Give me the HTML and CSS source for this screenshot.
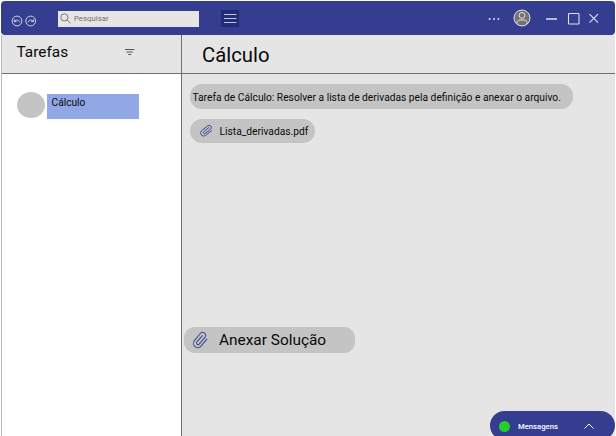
FILE: index.html
```html
<!DOCTYPE html>
<html lang="pt-BR">
<head>
<meta charset="utf-8">
<title>Tarefas</title>
<link rel="stylesheet" href="styles.css">
</head>
<body>
<div class="app">
  <header class="topbar">
    <svg class="history" width="26" height="12" viewBox="0 0 26 12">
      <circle cx="6" cy="6" r="4.9"/><circle cx="19.7" cy="6" r="4.9"/>
      <path d="M3.3 4.3v2.3h2.3M3.5 6.4c1.5-2.1 4.6-1.8 5.2.9M22.4 4.3v2.3h-2.3M22.2 6.4c-1.5-2.1-4.6-1.8-5.2.9"/>
    </svg>
    <label class="search">
      <svg width="11" height="11" viewBox="0 0 11 11"><circle cx="4.4" cy="4.4" r="3.6"/><path d="M7 7l3.4 3.4"/></svg>
      <span>Pesquisar</span>
    </label>
    <div class="menu"><svg width="18" height="17" viewBox="0 0 18 17"><path d="M3 4.5h12.5M3 8.5h12.5M3 12.5h12.5"/></svg></div>
    <svg class="dots" width="12" height="4" viewBox="0 0 12 4"><circle cx="1.6" cy="2" r="1"/><circle cx="6" cy="2" r="1"/><circle cx="10.4" cy="2" r="1"/></svg>
    <svg class="avatar" width="18" height="18" viewBox="0 0 18 18"><circle class="disc" cx="9" cy="9" r="8"/><circle cx="9" cy="6.4" r="2.9"/><path d="M4 15v-1.2c0-2 1.2-2.8 3-2.8h4c1.8 0 3 .8 3 2.8V15"/></svg>
    <svg class="window" width="54" height="13" viewBox="0 0 54 13"><path class="minimize" d="M0 7h11"/><rect x="22.5" y="1.5" width="10.5" height="10.5" rx=".6"/><path d="M43.5 2.2l8.5 8.5M52 2.2l-8.5 8.5"/></svg>
  </header>
  <div class="columns">
    <aside class="sidebar">
      <div class="heading side-heading">
        <h2>Tarefas</h2>
        <svg width="10" height="8" viewBox="0 0 10 8"><path d="M0 1.5h9.5M1.5 4h6.5M3.2 6.5h3"/></svg>
      </div>
      <div class="task"><span class="task-dot"></span><span class="task-name">Cálculo</span></div>
    </aside>
    <main class="content">
      <div class="heading main-heading"><h1>Cálculo</h1></div>
      <p class="pill description">Tarefa de Cálculo: Resolver a lista de derivadas pela definição e anexar o arquivo.</p>
      <div class="pill file">
        <svg width="13" height="12" viewBox="0 0 13 12"><path transform="translate(6.7 5.6) rotate(-38)" d="M4 -1H-3.2A1.2 1.2 0 0 0 -3.2 1.3H3.8A2.2 2.2 0 0 0 3.8 -3.1H-3.8A3.1 3.1 0 0 0 -3.8 3.1H4"/></svg>
        <span>Lista_derivadas.pdf</span>
      </div>
      <div class="pill attach">
        <svg width="16" height="18" viewBox="0 0 16 18"><path transform="translate(7.7 8.8) rotate(-50) scale(1.1)" d="M4.2 -1.3H-3.9A1.4 1.4 0 0 0 -3.9 1.5H4.2A2.7 2.7 0 0 0 4.2 -3.9H-4.2A3.9 3.9 0 0 0 -4.2 3.9H4.4"/></svg>
        <span>Anexar Solução</span>
      </div>
    </main>
  </div>
  <div class="messages">
    <i class="online"></i><span>Mensagens</span>
    <svg width="10" height="6" viewBox="0 0 10 6"><path d="M.5 5.5L5 1l4.5 4.5"/></svg>
  </div>
</div>
</body>
</html>
```
FILE: styles.css
```css
* { box-sizing: border-box; }
body { margin: 0; background: #fff; color: #090909; font-family: Roboto, sans-serif; }
h1, h2, p { margin: 0; font-weight: 400; }
svg { display: block; flex: none; fill: none; stroke: currentColor; }
span { white-space: nowrap; }

.app { position: relative; width: 616px; height: 436px; padding: 1px 1px 0; overflow: hidden; display: flex; flex-direction: column; }
.topbar { position: relative; height: 34px; flex: none; display: flex; align-items: center; border-radius: 4px; background: #343d8f; color: #dfe1f0; }
.history { margin: 5px 0 0 10px; stroke-width: .9; }
.search { width: 141px; height: 16px; margin: 1px 0 0 21px; padding-left: 2px; display: flex; align-items: center; gap: 3px; background: #e5e5e5; color: #707070; font-size: 7.8px; }
.search svg { stroke-width: .9; }
.search span { line-height: 10px; }
.menu { width: 18px; height: 17px; margin: 1px 0 0 22px; background: #222b78; color: #c2c6dd; }
.dots { margin: 2px 0 0 248.5px; fill: currentColor; stroke: none; }
.avatar { margin: 0 0 0 13.5px; }
.disc { fill: #74716f; }
.window { margin: 0 0 0 15px; stroke-width: 1.1; }
.minimize { stroke-width: 1.5; }

.columns { flex: 1; display: grid; grid-template-columns: 180px 1fr; border-left: 1px solid #b9b9b9; }
.sidebar { border-right: 1px solid #6e6e6e; background: #fff; }
.content { display: flex; flex-direction: column; align-items: flex-start; background: #e5e5e5; }
.heading { height: 39px; display: flex; border-bottom: 1px solid #707070; background: #e5e5e5; }
.side-heading { padding-left: 14.5px; }
.side-heading h2 { width: 108px; padding-top: 7px; font-size: 15.4px; line-height: 20px; }
.side-heading svg { margin-top: 13px; color: #555; }
.main-heading { width: 100%; padding: 8px 0 0 20px; }
.main-heading h1 { font-size: 20.3px; line-height: 25px; }

.task { display: flex; margin: 18px 0 0 15px; gap: 2px; }
.task-dot { width: 28px; height: 26px; border-radius: 50%; background: #c4c4c4; }
.task-name { width: 92px; height: 25px; margin-top: 2px; padding: 2px 0 0 4.5px; background: #91a7e6; font-size: 10.2px; line-height: 13px; }

.pill { display: flex; align-items: center; background: #c4c4c4; }
.pill svg { overflow: visible; color: #39458f; stroke-width: .9; }
.description { width: 383px; height: 25px; margin: 10px 0 0 8px; padding: 2px 0 0 2.5px; border-radius: 12px; font-size: 10.24px; white-space: nowrap; }
.file { width: 125px; height: 24px; margin: 10px 0 0 8px; padding-left: 10px; gap: 6.5px; border-radius: 12px; font-size: 10.24px; }
.attach { width: 171px; height: 26px; margin: 184px 0 0 2px; padding-left: 8.5px; gap: 10.5px; border-radius: 11px; font-size: 15.4px; }

.messages { position: absolute; left: 490px; top: 411px; width: 125px; height: 29px; padding: 1px 0 0 9px; display: flex; align-items: center; border-radius: 15px; background: #343d8f; color: #fff; font-size: 7.7px; font-weight: 500; }
.online { width: 11px; height: 11px; margin-right: 8px; border-radius: 50%; background: #27ce2b; }
.messages span { width: 66px; }
```
